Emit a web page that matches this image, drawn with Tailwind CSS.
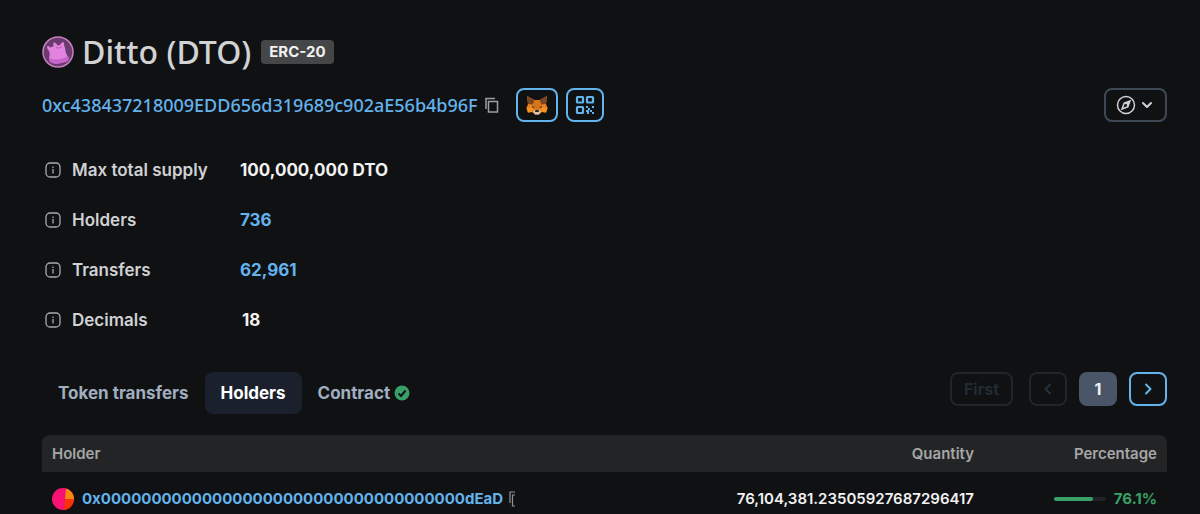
<!DOCTYPE html>
<html lang="en">
<head>
  <meta charset="UTF-8" />
  <meta name="viewport" content="width=device-width, initial-scale=1.0"/>
  <title>Ditto (DTO) token</title>
  <script src="https://cdn.jsdelivr.net/npm/@tailwindcss/browser@4"></script>
</head>
<body class="bg-[#101112] font-['Inter','Liberation_Sans',sans-serif] overflow-hidden">
  <main class="pl-[42px] pr-[33px] pt-8">

    <!-- token title -->
    <div class="flex items-center h-10">
      <svg class="w-8 h-8 shrink-0" viewBox="0 0 32 32">
        <circle cx="16" cy="16" r="15" fill="#6b3b70" stroke="#c77fc0" stroke-width="1.5"/>
        <path d="M5 11 Q6 9 8 11.500 Q10 10.500 11.500 10.500 Q10.500 6 13 6.500 Q14.500 8 16 9.500 Q18 9.500 19.500 7 Q21.500 5 22 7.500 Q22 9.500 23 12 Q23.500 15 24 17 Q25 20 27 22 Q26 26 21 26.500 Q15 28.500 10 27 Q6 25 7.500 20 Q8 17 7 15 Q5 13 5 11Z" fill="#e283e0"/>
        <path d="M7.500 22 Q15 26 26 20 Q28 23 25 25.500 Q15 29.500 8 26 Q6.500 24 7.500 22Z" fill="#c764cc"/>
        <path d="M14 11.500 Q17 13 19.500 11" stroke="#b45fba" stroke-width="1" fill="none"/>
      </svg>
      <h1 class="ml-2 text-[32px] leading-10 font-medium text-[#d2d3d4] font-['Noto_Sans','Open_Sans',sans-serif]">Ditto (DTO)</h1>
      <span class="ml-2.5 px-2 h-6 rounded bg-[#454647] text-[15px] leading-6 font-bold text-[#f2f2f2]">ERC-20</span>
    </div>

    <!-- address and wallet buttons -->
    <div class="flex items-center mt-4">
      <a href="#" class="text-lg leading-6 font-medium text-[#63b3ed] font-['Noto_Sans','Open_Sans',sans-serif]">0xc438437218009EDD656d319689c902aE56b4b96F</a>
      <button aria-label="Copy address" class="ml-1.5 text-[#9a9fa6]">
        <svg class="w-4 h-4" viewBox="0 0 16 16" fill="none" stroke="currentColor" stroke-width="1.500">
          <path d="M2 12V1.500H11"/>
          <rect x="4.500" y="4.500" width="9" height="10.500"/>
        </svg>
      </button>
      <button aria-label="Add token to MetaMask" class="ml-4 w-[42px] h-[34px] rounded-lg border-2 border-[#63b3ed] flex items-center justify-center">
        <svg class="w-[22px] h-5" viewBox="0 0 22 20">
          <path d="M1 1 L8.500 5 H13.500 L21 1 L20 9 L21.500 13 L20 17.500 L16 17 L13 19.500 H9 L6 17 L2 17.500 L0.500 13 L2 9Z" fill="#e8821e"/>
          <path d="M1 1 L8.500 5 L7 9.500 L2 9Z M21 1 L13.500 5 L15 9.500 L20 9Z" fill="#7c4420"/>
          <path d="M7 9.500L8.500 5H13.500L15 9.500L13 15H9Z" fill="#d97518"/>
          <path d="M0.500 13 L6.500 12.500 L6 17 L2 17.500Z M21.500 13 L15.500 12.500 L16 17 L20 17.500Z" fill="#f6921f"/>
          <path d="M6 10.500 L9 12.500 L6.500 12.800Z M16 10.500 L13 12.500 L15.500 12.800Z" fill="#3b3330"/>
          <path d="M7 16 L9 15 H13 L15 16 L13 19.500 H9Z" fill="#d5c3b4"/>
          <path d="M9.500 15 H12.500 L13 17 H9Z" fill="#222"/>
        </svg>
      </button>
      <button aria-label="Show QR code" class="ml-2 w-[38px] h-[34px] rounded-lg border-2 border-[#63b3ed] text-[#63b3ed] flex items-center justify-center">
        <svg class="w-5 h-5" viewBox="0 0 20 20" fill="none" stroke="currentColor" stroke-width="2.200">
          <rect x="2" y="2" width="6" height="5.500" rx="0.500"/>
          <rect x="12" y="2" width="6" height="5.500" rx="0.500"/>
          <rect x="2" y="12" width="6" height="6" rx="0.500"/>
          <path d="M11 12H13M13 14H15M11 16H13V19M15 16H17M17 12H19M17 18H19" stroke-width="2"/>
        </svg>
      </button>
      <button aria-label="Open in explorer" class="ml-auto w-[63px] h-[34px] rounded-lg border-2 border-[#3f4855] text-[#d0d1d2] flex items-center justify-center gap-1">
        <svg class="w-5 h-5" viewBox="0 0 20 20" fill="none" stroke="currentColor" stroke-width="1.500">
          <circle cx="10" cy="10" r="8.500"/>
          <path d="M14 6L11.800 11.800L6 14L8.200 8.200Z" />
          <path d="M14 6L11.800 11.800L8.200 8.200Z" fill="currentColor" stroke="none"/>
          <circle cx="10" cy="10" r="1" fill="#101112" stroke="none"/>
        </svg>
        <svg class="w-4 h-4" viewBox="0 0 16 16" fill="none" stroke="currentColor" stroke-width="2" stroke-linecap="round" stroke-linejoin="round"><path d="M3 6L7 10L11 6"/></svg>
      </button>
    </div>

    <!-- token facts -->
    <dl class="mt-9 grid grid-cols-[198px_1fr] gap-y-[26px] text-[17px] leading-6">
      <dt class="flex items-center gap-[10px] pl-0.5 font-semibold text-[#d0d1d2]">
        <svg class="w-[18px] h-[18px]" viewBox="0 0 18 18" fill="none" stroke="#a9abad" stroke-width="1.300"><rect x="2" y="2" width="14" height="14" rx="4"/><path d="M9 8V12.500M9 5.500V7"/></svg>
        Max total supply
      </dt>
      <dd class="font-bold text-[#f2f2f2]">100,000,000 DTO</dd>
      <dt class="flex items-center gap-[10px] pl-0.5 font-semibold text-[#d0d1d2]">
        <svg class="w-[18px] h-[18px]" viewBox="0 0 18 18" fill="none" stroke="#a9abad" stroke-width="1.300"><rect x="2" y="2" width="14" height="14" rx="4"/><path d="M9 8V12.500M9 5.500V7"/></svg>
        Holders
      </dt>
      <dd class="font-bold"><a href="#" class="text-[#63b3ed]">736</a></dd>
      <dt class="flex items-center gap-[10px] pl-0.5 font-semibold text-[#d0d1d2]">
        <svg class="w-[18px] h-[18px]" viewBox="0 0 18 18" fill="none" stroke="#a9abad" stroke-width="1.300"><rect x="2" y="2" width="14" height="14" rx="4"/><path d="M9 8V12.500M9 5.500V7"/></svg>
        Transfers
      </dt>
      <dd class="font-bold"><a href="#" class="text-[#63b3ed]">62,961</a></dd>
      <dt class="flex items-center gap-[10px] pl-0.5 font-semibold text-[#d0d1d2]">
        <svg class="w-[18px] h-[18px]" viewBox="0 0 18 18" fill="none" stroke="#a9abad" stroke-width="1.300"><rect x="2" y="2" width="14" height="14" rx="4"/><path d="M9 8V12.500M9 5.500V7"/></svg>
        Decimals
      </dt>
      <dd class="pl-0.5 font-bold text-[#f2f2f2]">18</dd>
    </dl>

    <!-- tabs and pager -->
    <div class="mt-10 flex items-start justify-between">
      <nav class="flex text-[17px] leading-6 font-bold text-[#a0aec0]">
        <button class="h-[42px] px-4">Token transfers</button>
        <button class="h-[42px] px-4 rounded-lg bg-[#1a202c] text-white">Holders</button>
        <button class="h-[42px] px-4 flex items-center gap-1">
          Contract
          <svg class="w-4 h-4" viewBox="0 0 16 16"><circle cx="8" cy="8" r="7.500" fill="#38a169"/><path d="M4.500 8.500L7 11L11.500 5.500" fill="none" stroke="#101112" stroke-width="2"/></svg>
        </button>
      </nav>
      <div class="flex text-base leading-6 font-bold">
        <button disabled class="w-[63px] h-[34px] rounded-lg border-2 border-[#1d252d] text-[#202b36]">First</button>
        <button disabled aria-label="Previous page" class="ml-4 w-[38px] h-[34px] rounded-lg border-2 border-[#1d252d] text-[#26323e] flex items-center justify-center">
          <svg class="w-4 h-4" viewBox="0 0 16 16" fill="none" stroke="currentColor" stroke-width="2" stroke-linecap="round" stroke-linejoin="round"><path d="M10 3.500L5.500 8L10 12.500"/></svg>
        </button>
        <button class="ml-3 w-[38px] h-[34px] rounded-lg bg-[#4a5568] text-[#f2f2f2]">1</button>
        <button aria-label="Next page" class="ml-3 w-[38px] h-[34px] rounded-lg border-2 border-[#63b3ed] text-[#63b3ed] flex items-center justify-center">
          <svg class="w-4 h-4" viewBox="0 0 16 16" fill="none" stroke="currentColor" stroke-width="2" stroke-linecap="round" stroke-linejoin="round"><path d="M6 3.500L10.500 8L6 12.500"/></svg>
        </button>
      </div>
    </div>

    <!-- holders -->
    <table class="mt-[21px] w-full text-[15px] leading-5">
      <thead class="text-[#a5a6a7]">
        <tr>
          <th class="h-[37px] pl-[10px] text-left font-semibold bg-[#232425] rounded-tl-lg">Holder</th>
          <th class="text-right font-semibold bg-[#232425]">Quantity</th>
          <th class="w-[193px] pr-[10px] text-right font-semibold bg-[#232425] rounded-tr-lg">Percentage</th>
        </tr>
      </thead>
      <tbody>
        <tr>
          <td class="h-[54px] pl-[10px]">
            <div class="flex items-center">
              <svg class="w-[22px] h-[22px]" viewBox="0 0 22 22">
                <circle cx="11" cy="11" r="11" fill="#fa1272"/>
                <path d="M13 11L14 0.400A11 11 0 0 1 22 11.500Z" fill="#f58a0b"/>
                <path d="M13 11L22 11.500A11 11 0 0 1 12 22Z" fill="#f83208"/>
              </svg>
              <a href="#" class="ml-2 font-bold text-[#63b3ed]">0x000000000000000000000000000000000000dEaD</a>
              <button aria-label="Copy holder address" class="ml-1.5 text-[#8f949b]">
                <svg class="w-[6px] h-4" viewBox="0 0 6 16" fill="none" stroke="currentColor" stroke-width="1.200"><path d="M1 12V1H6M6 4H3.500V15H6"/></svg>
              </button>
            </div>
          </td>
          <td class="text-right font-semibold text-[#f2f2f2]">76,104,381.23505927687296417</td>
          <td class="pr-[10px]">
            <div class="flex items-center justify-end gap-2 font-bold text-[#38a169]">
              <div class="w-[52px] h-1 rounded-full bg-[#202225]"><div class="h-1 rounded-full bg-[#38a169]" style="width: 76.1%"></div></div>
              76.1%
            </div>
          </td>
        </tr>
      </tbody>
    </table>
  </main>
</body>
</html>
